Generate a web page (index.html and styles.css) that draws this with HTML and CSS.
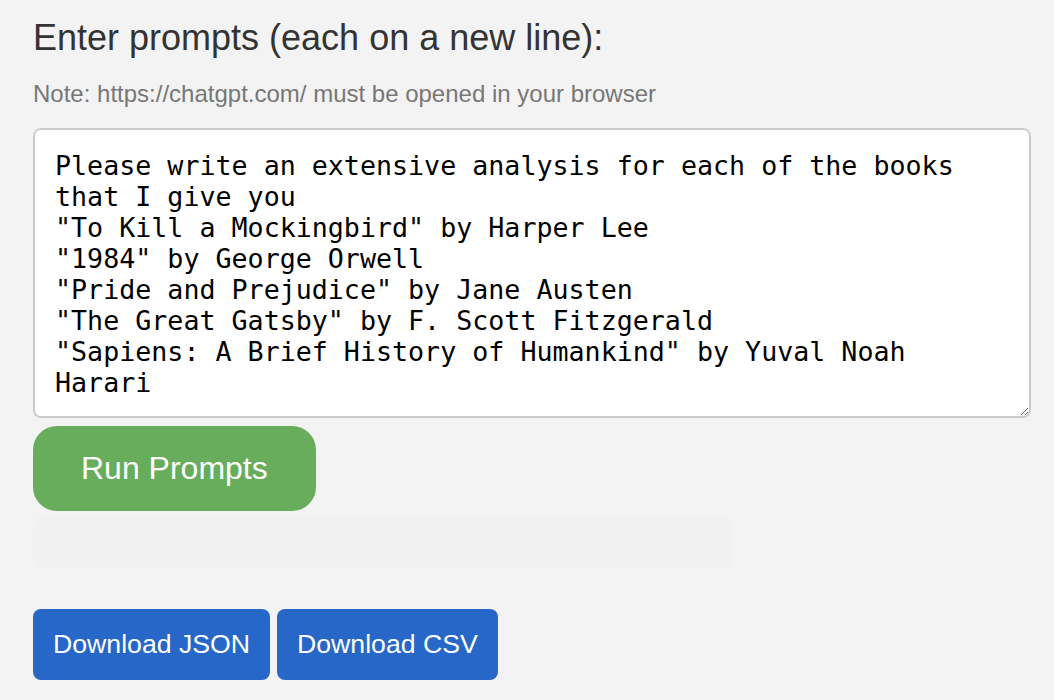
FILE: index.html
```html
<!DOCTYPE html>
<html lang="en">
<head>
<meta charset="utf-8">
<title>Prompts</title>
<link rel="stylesheet" href="styles.css">
</head>
<body>
<main class="panel">
  <h1 class="title">Enter prompts (each on a new line):</h1>
  <p class="note">Note: https://chatgpt.com/ must be opened in your browser</p>
  <textarea class="prompts" spellcheck="false">Please write an extensive analysis for each of the books that I give you
"To Kill a Mockingbird" by Harper Lee
"1984" by George Orwell
"Pride and Prejudice" by Jane Austen
"The Great Gatsby" by F. Scott Fitzgerald
"Sapiens: A Brief History of Humankind" by Yuval Noah Harari</textarea>
  <div class="run-row"><button class="run">Run Prompts</button></div>
  <div class="status"></div>
  <div class="downloads">
    <button class="dl">Download JSON</button>
    <button class="dl">Download CSV</button>
  </div>
</main>
</body>
</html>
```
FILE: styles.css
```css
html, body {
  margin: 0;
  padding: 0;
  background: #f3f3f3;
}
body {
  font-family: "Liberation Sans", Arial, sans-serif;
}
.panel {
  display: flex;
  flex-direction: column;
  align-items: flex-start;
  padding: 17px 0 0 33px;
}
.title {
  margin: 0;
  font-size: 36px;
  font-weight: 400;
  color: #333;
  line-height: normal;
}
.note {
  margin: 21px 0 0;
  font-size: 24px;
  color: #777;
  line-height: normal;
}
.prompts {
  box-sizing: border-box;
  margin: 20px 0 0;
  width: 998px;
  height: 290px;
  padding: 20px;
  border: 2px solid #cccccc;
  border-radius: 8px;
  background: #fff;
  font-family: "DejaVu Sans Mono", monospace;
  font-size: 26.667px;
  line-height: normal;
  color: #000;
  resize: both;
  outline: none;
}
.run-row {
  margin-top: 8px;
}
.run {
  display: block;
  border: 0;
  margin: 0;
  padding: 24px 48px;
  border-radius: 24px;
  background: #67ad5b;
  color: #fff;
  font-family: "Liberation Sans", Arial, sans-serif;
  font-size: 32px;
  line-height: 37px;
}
.status {
  margin-top: 7px;
  width: 699px;
  height: 50px;
  border-radius: 8px;
  background: #f1f1f1;
}
.downloads {
  margin-top: 41px;
  display: flex;
  gap: 7px;
}
.dl {
  border: 0;
  margin: 0;
  padding: 20px;
  border-radius: 8px;
  background: #2667c7;
  color: #fff;
  font-family: "Liberation Sans", Arial, sans-serif;
  font-size: 26.667px;
  line-height: 31px;
}
```
